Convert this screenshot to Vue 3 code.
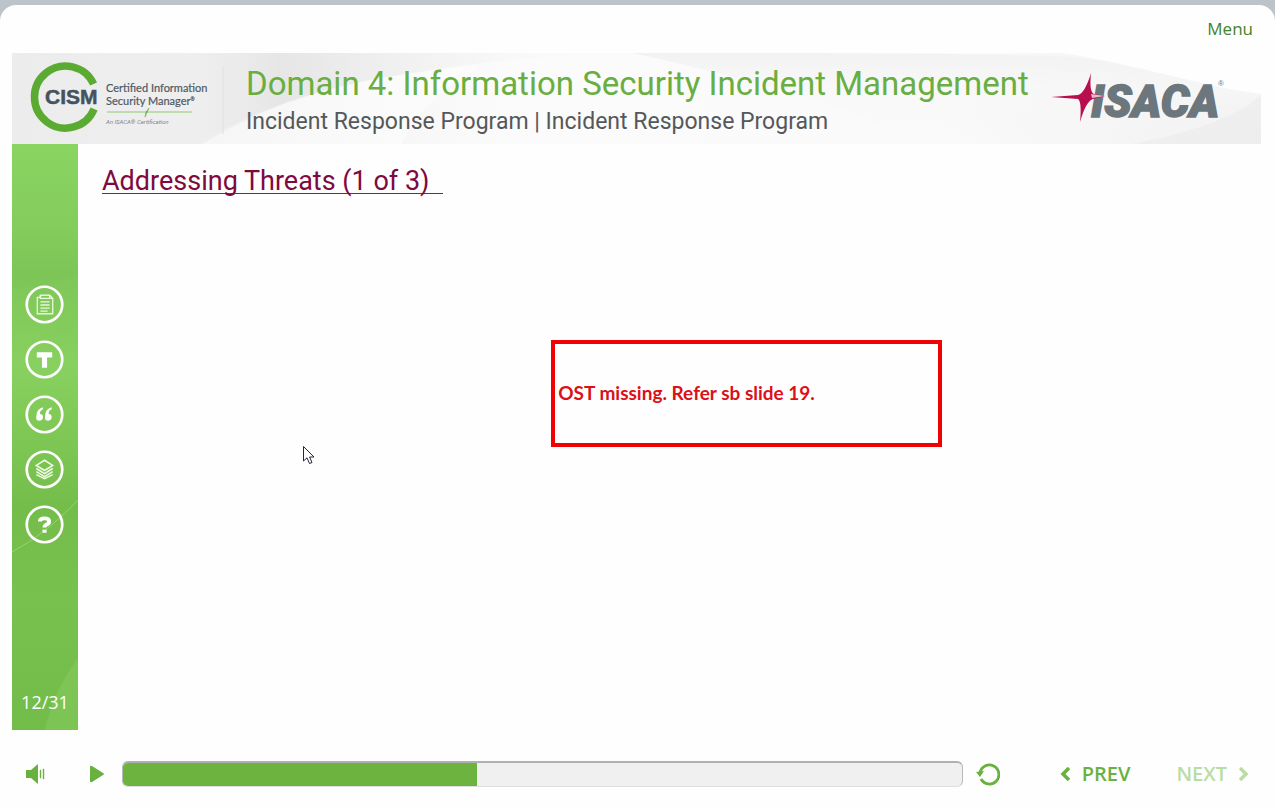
<script setup>
import { ref } from 'vue'

const tools = [
  { id: 'notes', label: 'Notes' },
  { id: 'transcript', label: 'Transcript' },
  { id: 'glossary', label: 'Glossary' },
  { id: 'resources', label: 'Resources' },
  { id: 'help', label: 'Help' },
]
const slide = ref(12)
const total = 31
const progress = ref(42.2)
</script>

<template>
  <div class="player">
    <nav class="topbar"><button type="button" class="menu">Menu</button></nav>

    <header class="banner">
      <svg class="swoosh" viewBox="0 0 1249 91" preserveAspectRatio="none" aria-hidden="true">
        <defs>
          <linearGradient id="base" x1="0" x2="1" y1="0" y2="0">
            <stop offset="0" stop-color="#ececed" />
            <stop offset="0.17" stop-color="#efeff0" />
            <stop offset="0.24" stop-color="#f4f4f4" />
            <stop offset="0.4" stop-color="#fbfbfb" />
            <stop offset="0.75" stop-color="#fafafa" />
            <stop offset="1" stop-color="#f1f1f1" />
          </linearGradient>
          <linearGradient id="sweep" x1="0" x2="1" y1="0" y2="0">
            <stop offset="0" stop-color="#e6e6e7" stop-opacity="0" />
            <stop offset="0.2" stop-color="#e6e6e7" />
            <stop offset="1" stop-color="#fafafa" stop-opacity="0" />
          </linearGradient>
          <linearGradient id="fall" x1="0" x2="0" y1="0" y2="1">
            <stop offset="0" stop-color="#f2f2f2" />
            <stop offset="0.45" stop-color="#f8f8f8" stop-opacity=".6" />
            <stop offset="1" stop-color="#f5f5f5" stop-opacity="0" />
          </linearGradient>
        </defs>
        <rect width="1249" height="91" fill="url(#base)" />
        <path d="M180 91C235 65 290 35 400 20C470 8 540 2 620 0H180Z" fill="url(#sweep)" />
        <path d="M190 91C260 48 340 24 470 12C430 35 400 64 390 91Z" fill="#fff" opacity=".45" />
        <path d="M620 0C820 0 980 0 1060 4C1130 12 1190 34 1249 41V91H900C860 58 730 24 620 0Z" fill="url(#fall)" />
        <path d="M1050 0C1130 12 1190 34 1249 41V0Z" fill="#fefefe" />
        <path d="M1120 91C1190 78 1230 60 1249 42V91Z" fill="#ebebeb" opacity=".6" />
        <path d="M211 14V81" stroke="#e0e0e2" />
      </svg>

      <svg class="cism" viewBox="0 0 188 74" role="img" aria-label="CISM Certified Information Security Manager">
        <path d="M62.6 22A31 31 0 1 0 63.1 47" fill="none" stroke="#5bab33" stroke-width="7.5" />
        <text x="14" y="42" class="cism-name">CISM</text>
        <text x="75" y="30" class="cism-line">Certified Information</text>
        <text x="75" y="43" class="cism-line">Security Manager<tspan dy="-4" font-size="5">®</tspan></text>
        <path d="M76 50H161" stroke="#8fca70" />
        <path d="M118 46L114 55L115 50Z" fill="#6fae4f" stroke="#6fae4f" stroke-width=".6" />
        <text x="75" y="62" class="cism-small">An ISACA® Certification</text>
      </svg>

      <div class="titles">
        <h1>Domain 4: Information Security Incident Management</h1>
        <p>Incident Response Program | Incident Response Program</p>
      </div>

      <svg class="isaca" viewBox="0 0 176 52" role="img" aria-label="ISACA">
        <text x="40" y="44" class="isaca-name">ISACA</text>
        <path d="M0 24L27 22Q34 20 40 0Q38 19 43 21L54 23L42 26Q35 28 29 49Q31 29 27 26Z" fill="#b90e4d" />
        <path d="M40 21L54 23L41 25Z" fill="#edb8c9" />
        <text x="167" y="13" class="registered">®</text>
      </svg>
    </header>

    <div class="body">
      <aside class="sidebar">
        <svg class="leaf" viewBox="0 0 66 586" preserveAspectRatio="none" aria-hidden="true">
          <defs>
            <linearGradient id="green" x1="0" x2="0" y1="0" y2="1">
              <stop offset="0" stop-color="#8ad462" />
              <stop offset=".14" stop-color="#84cd5d" />
              <stop offset=".22" stop-color="#7cc556" />
              <stop offset=".38" stop-color="#88d05f" />
              <stop offset=".52" stop-color="#7dc653" />
              <stop offset=".62" stop-color="#74bd4b" />
              <stop offset=".78" stop-color="#79c14e" />
              <stop offset="1" stop-color="#72bc4a" />
            </linearGradient>
          </defs>
          <rect width="66" height="586" fill="url(#green)" />
          <path d="M0 144Q40 142 66 130V170Q30 195 0 202Z" fill="#96da70" opacity=".1" />
          <path d="M0 408Q34 390 66 356" fill="none" stroke="#b6e798" opacity=".5" />
          <path d="M33 586Q40 550 66 514V586Z" fill="#9cdb75" opacity=".25" />
        </svg>
        <div class="tools">
          <button v-for="t in tools" :key="t.id" type="button" class="tool" :aria-label="t.label">
            <svg viewBox="0 0 38 38" fill="none" stroke="#fff">
              <circle cx="19" cy="19" r="17.3" stroke-width="2.6" />
              <g v-if="t.id === 'notes'" stroke-width="1.3" stroke="#e8f8dc">
                <path d="M12 12H15V10H24L27 13V28H12Z" />
                <path d="M15 10V13H24V10M24 13H27M15 16.500H24M15 19.500H24M15 22.500H24M15 25.500H22" />
              </g>
              <path v-else-if="t.id === 'transcript'" d="M11.500 12H26.500V17H21.500V27H16.500V17H11.500Z" fill="#fff" stroke="none" />
              <path v-else-if="t.id === 'glossary'" d="M17.5 12Q11 14 11 21V23Q11 25 14 25Q17.5 25 17.5 21.5Q17.5 18.5 14.5 18.5Q14.5 15 17.5 14ZM26 12Q19.500 14 19.500 21V23Q19.500 25 22.500 25Q26 25 26 21.500Q26 18.500 23 18.500Q23 15 26 14Z" fill="#fff" stroke="none" />
              <g v-else-if="t.id === 'resources'" stroke-width="1.5" stroke="#effbe6">
                <path d="M19 10L27 15L19 20L11 15Z" />
                <path d="M11 18L19 23L27 18M11 21L19 26L27 21M11 24L19 28L27 24" />
              </g>
              <g v-else>
                <path d="M14.500 16Q14.500 13 19 13Q23.500 13 23.500 16Q23.500 18 21 19Q19 20 19 22" stroke-width="3.800" />
                <path d="M17 24H21V27H17Z" fill="#fff" stroke="none" />
              </g>
            </svg>
          </button>
        </div>
        <span class="count">{{ slide }}/{{ total }}</span>
      </aside>

      <main class="stage">
        <h2>Addressing Threats (1 of 3)&nbsp;&nbsp;</h2>
        <div class="remark">OST missing. Refer sb slide 19.</div>
        <svg class="cursor" viewBox="0 0 13 20" aria-hidden="true">
          <path d="M1.500 1.500V16L5 12.800L7.500 18.500L10 17.500L7.600 12H12Z" fill="#fff" stroke="#24243a" />
        </svg>
      </main>
    </div>

    <footer class="controls">
      <button type="button" class="volume" aria-label="Volume">
        <svg viewBox="0 0 20 20"><path d="M0 6H5L12 0V20L5 14H0Z" /><path d="M14 6H15V14H14ZM17 5H18V15H17Z" stroke="#69b13e" stroke-width=".4" /></svg>
      </button>
      <button type="button" class="play" aria-label="Play">
        <svg viewBox="0 0 16 18"><path d="M1 2Q1 0 3 1L14 8Q16 9 14 10L3 17Q1 18 1 16Z" /></svg>
      </button>
      <div class="track" role="progressbar" aria-label="Slide progress" :aria-valuenow="progress">
        <div class="fill" :style="{ width: progress + '%' }"></div>
      </div>
      <button type="button" class="replay" aria-label="Replay">
        <svg viewBox="0 0 24 24"><path d="M4 11A9.500 9.500 0 1 1 5 17" fill="none" stroke="#69b13e" stroke-width="2.800" /><path d="M0 10L8 9L4 15Z" /></svg>
      </button>
      <button type="button" class="step prev">
        <svg viewBox="0 0 10 14"><path d="M9 1L3 7L9 13" /></svg>PREV
      </button>
      <button type="button" class="step next" disabled>
        NEXT<svg viewBox="0 0 10 14"><path d="M1 1L7 7L1 13" /></svg>
      </button>
    </footer>
  </div>
</template>

<style>
body {
  margin: 0;
  background: #bcc3c9;
}
</style>

<style scoped>
* {
  box-sizing: border-box;
}
.player {
  display: flex;
  flex-direction: column;
  min-height: calc(100vh - 5px);
  margin-top: 5px;
  background: #fefefe;
  border-radius: 16px 16px 0 0;
  font-family: "Open Sans", sans-serif;
}
button {
  padding: 0;
  border: 0;
  background: none;
  font: inherit;
  cursor: pointer;
}
svg {
  display: block;
}
.topbar {
  display: flex;
  justify-content: flex-end;
  height: 48px;
  padding: 0 22px 2px;
}
.menu {
  color: #43832a;
  font-size: 17px;
}
.banner {
  position: relative;
  display: flex;
  align-items: center;
  height: 91px;
  margin: 0 14px 0 12px;
}
.swoosh,
.leaf {
  position: absolute;
  inset: 0;
  width: 100%;
  height: 100%;
}
.cism {
  position: relative;
  flex: none;
  width: 188px;
  height: 74px;
  margin: 0 27px 0 19px;
  overflow: visible;
}
.cism .cism-name {
  font: bold 21px "Liberation Sans", sans-serif;
  fill: #44535e;
  stroke: #44535e;
  stroke-width: 0.5px;
}
.cism .cism-line {
  font: 11px Lato, sans-serif;
  fill: #4e5a64;
  stroke: #4e5a64;
  stroke-width: 0.2px;
}
.cism .cism-small {
  font: italic 6px Roboto, sans-serif;
  fill: #7c858c;
}
.titles {
  position: relative;
  flex: 1;
  padding-top: 6px;
  font-family: Roboto, sans-serif;
  white-space: nowrap;
}
h1 {
  margin: 0;
  color: #69ae40;
  font-size: 33px;
  line-height: 40px;
  font-weight: normal;
}
p {
  margin: 0;
  color: #55585a;
  font-size: 23px;
  line-height: 36px;
}
.isaca {
  position: relative;
  flex: none;
  width: 176px;
  height: 52px;
  margin-right: 34px;
  overflow: visible;
}
.isaca-name {
  font: italic 900 45px Roboto, sans-serif;
  fill: #6b767d;
  stroke: #6b767d;
  stroke-width: 1.5px;
}
.registered {
  font: 8px "Liberation Sans", sans-serif;
  fill: #6b767d;
}
.body {
  display: flex;
  flex: 1;
  margin: 0 14px 0 12px;
}
.sidebar {
  position: relative;
  display: flex;
  flex-direction: column;
  justify-content: space-between;
  align-items: center;
  width: 66px;
  padding: 141px 0 15px;
}
.tools {
  position: relative;
  display: grid;
  gap: 16px;
  margin-right: 2px;
}
.tool,
.tool svg {
  width: 39px;
  height: 39px;
}
.count {
  position: relative;
  color: #fff;
  font-size: 18px;
  line-height: 26px;
}
.stage {
  position: relative;
  flex: 1;
  padding: 26px 24px;
}
h2 {
  width: fit-content;
  margin: 0;
  border-bottom: 1px solid #8a2050;
  color: #7e0a40;
  font: 27px/23px Roboto, sans-serif;
}
.remark {
  position: absolute;
  top: 196px;
  left: 40%;
  display: flex;
  align-items: center;
  width: 33%;
  height: 107px;
  padding: 0 3px 2px;
  border: 4px solid #f00202;
  color: #dc1018;
  font: bold 19px Lato, sans-serif;
}
.cursor {
  position: absolute;
  top: 301px;
  left: 224px;
  width: 13px;
  height: 20px;
}
.controls {
  display: flex;
  align-items: center;
  height: 79px;
  padding: 9px 26px 0 26px;
}
.controls svg {
  fill: #69b13e;
}
.volume svg {
  width: 20px;
  height: 20px;
}
.play {
  margin: 0 17px 0 43px;
}
.play svg {
  width: 16px;
  height: 18px;
}
.track {
  flex: 1;
  height: 26px;
  overflow: hidden;
  border: 1px solid #b8b8b8;
  border-top: 2px solid #b0b0b0;
  border-bottom-color: #dedede;
  border-radius: 6px;
  background: #f0f0f0;
}
.fill {
  height: 100%;
  background: #6cb33f;
}
.replay {
  margin: 0 60px 0 13px;
}
.replay svg {
  width: 24px;
  height: 24px;
}
.step {
  display: flex;
  align-items: center;
  gap: 12px;
  color: #69b13e;
  font-size: 20px;
  line-height: 26px;
  font-weight: 600;
}
.step svg {
  width: 10px;
  height: 14px;
  fill: none;
  stroke: #69b13e;
  stroke-width: 3.5px;
}
.prev {
  margin-right: 46px;
}
.next {
  color: #b9dda4;
}
.next svg {
  stroke: #b9dda4;
}
</style>
